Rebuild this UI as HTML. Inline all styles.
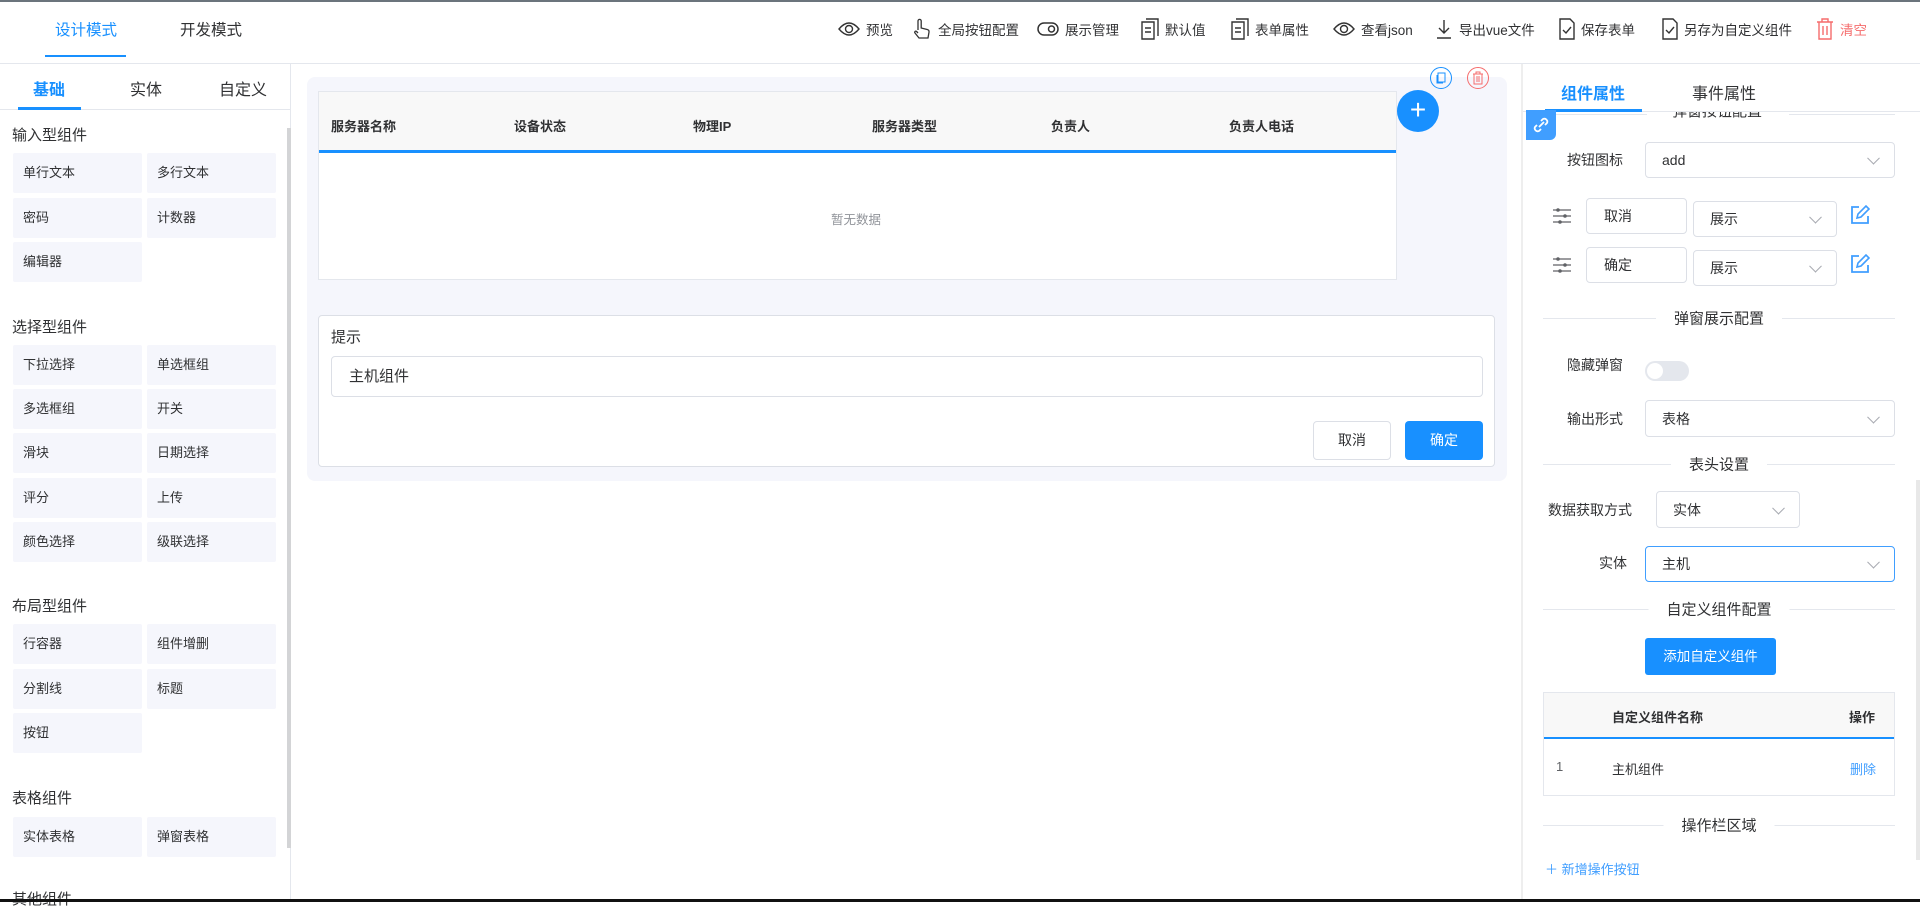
<!DOCTYPE html>
<html><head><meta charset="utf-8"><style>
*{margin:0;padding:0;box-sizing:border-box}
body{width:1920px;height:902px;overflow:hidden;background:#fff;font-family:"Liberation Sans","Noto Sans CJK SC",sans-serif;color:#303133;position:relative;font-size:14px}
.a{position:absolute;white-space:nowrap}
.tb{position:absolute;top:19px;height:20px;display:flex;align-items:center;font-size:13.5px;color:#303133}
.tb svg{margin-right:6px}
.cell{position:absolute;width:129px;height:40px;background:#f5f6fc;font-size:13px;color:#303133;padding-left:10px;line-height:40px;border-radius:2px}
.sec{position:absolute;left:12px;font-size:15px;color:#303133}
.th{position:absolute;top:116px;font-size:13px;font-weight:bold;color:#303133}
.sel{position:absolute;border:1px solid #dcdfe6;border-radius:4px;background:#fff;font-size:14px;color:#303133;padding-left:16px;display:flex;align-items:center}
.sel:after{content:"";position:absolute;right:16px;top:50%;width:8px;height:8px;border-right:1px solid #a8abb2;border-bottom:1px solid #a8abb2;transform:translateY(-70%) rotate(45deg)}
.lbl{position:absolute;font-size:14px;color:#303133;text-align:right}
.div{position:absolute;left:1543px;width:352px;height:1px;background:#e4e7ed}
.divt{position:absolute;background:#fff;padding:0 18px;font-size:15px;color:#303133;transform:translate(-50%,-50%);left:1719px}
</style></head><body>
<div class="a" style="left:0;top:0;width:1920px;height:2px;background:#6b747c"></div>
<!-- header -->
<div class="a" style="left:0;top:63px;width:1920px;height:1px;background:#e4e7ed"></div>
<div class="a" style="left:55px;top:18px;font-size:15.5px;color:#1890ff">设计模式</div>
<div class="a" style="left:45px;top:55px;width:81px;height:2px;background:#1890ff"></div>
<div class="a" style="left:180px;top:18px;font-size:15.5px;color:#303133">开发模式</div>

<div class="tb" style="left:838px"><svg width="22" height="16" viewBox="0 0 22 16"><path d="M1 8Q11-4 21 8Q11 20 1 8Z" fill="none" stroke="#333" stroke-width="1.4"/><circle cx="11" cy="8" r="3.5" fill="none" stroke="#333" stroke-width="1.4"/></svg>预览</div>
<div class="tb" style="left:912px"><svg width="20" height="22" viewBox="0 0 20 22"><path d="M6 12V3a1.6 1.6 0 013.2 0v7l6 1.5c1.5.4 2 1.2 1.8 2.6L16 20H7l-4-5c-.8-1 .3-2.4 1.5-1.6L6 15" fill="none" stroke="#333" stroke-width="1.3"/></svg>全局按钮配置</div>
<div class="tb" style="left:1037px"><svg width="22" height="14" viewBox="0 0 22 14"><rect x="1" y="1" width="20" height="12" rx="6" fill="none" stroke="#333" stroke-width="1.5"/><circle cx="14.5" cy="7" r="3" fill="none" stroke="#333" stroke-width="1.5"/></svg>展示管理</div>
<div class="tb" style="left:1141px"><svg width="18" height="22" viewBox="0 0 18 22"><path d="M5 1h12v17M1 4h12v17H1z" fill="none" stroke="#333" stroke-width="1.4"/><path d="M4 10h6M4 14h6" stroke="#333" stroke-width="1.4"/></svg>默认值</div>
<div class="tb" style="left:1231px"><svg width="18" height="22" viewBox="0 0 18 22"><path d="M5 1h12v17M1 4h12v17H1z" fill="none" stroke="#333" stroke-width="1.4"/><path d="M4 10h6M4 14h6" stroke="#333" stroke-width="1.4"/></svg>表单属性</div>
<div class="tb" style="left:1333px"><svg width="22" height="16" viewBox="0 0 22 16"><path d="M1 8Q11-4 21 8Q11 20 1 8Z" fill="none" stroke="#333" stroke-width="1.4"/><circle cx="11" cy="8" r="3.5" fill="none" stroke="#333" stroke-width="1.4"/></svg>查看json</div>
<div class="tb" style="left:1435px"><svg width="18" height="20" viewBox="0 0 18 20"><path d="M9 1v13M4 9l5 5 5-5M2 19h14" fill="none" stroke="#333" stroke-width="1.4"/></svg>导出vue文件</div>
<div class="tb" style="left:1559px"><svg width="16" height="22" viewBox="0 0 16 22"><path d="M1 1h10l4 4v16H1z" fill="none" stroke="#333" stroke-width="1.4"/><path d="M4 12l3 3 5-6" fill="none" stroke="#333" stroke-width="1.4"/></svg>保存表单</div>
<div class="tb" style="left:1662px"><svg width="16" height="22" viewBox="0 0 16 22"><path d="M1 1h10l4 4v16H1z" fill="none" stroke="#333" stroke-width="1.4"/><path d="M4 12l3 3 5-6" fill="none" stroke="#333" stroke-width="1.4"/></svg>另存为自定义组件</div>
<div class="tb" style="left:1816px;color:#f56c6c"><svg width="18" height="22" viewBox="0 0 18 22"><path d="M1 4h16M6 4V1h6v3M3 4v17h12V4M7 8v9M11 8v9" fill="none" stroke="#f56c6c" stroke-width="1.4"/></svg>清空</div>

<!-- left panel -->
<div class="a" style="left:290px;top:64px;width:1px;height:838px;background:#e4e7ed"></div>
<div class="a" style="left:0;top:109px;width:290px;height:1px;background:#e4e7ed"></div>
<div class="a" style="left:33px;top:76px;font-size:16px;color:#1890ff;font-weight:bold">基础</div>
<div class="a" style="left:18px;top:107px;width:63px;height:3px;background:#1890ff"></div>
<div class="a" style="left:130px;top:76px;font-size:16px">实体</div>
<div class="a" style="left:219px;top:76px;font-size:16px">自定义</div>
<div class="a" style="left:287px;top:128px;width:4px;height:720px;background:#d3d4d6"></div>

<div class="sec" style="top:124px">输入型组件</div>
<div class="cell" style="left:13px;top:153px">单行文本</div><div class="cell" style="left:147px;top:153px">多行文本</div>
<div class="cell" style="left:13px;top:198px">密码</div><div class="cell" style="left:147px;top:198px">计数器</div>
<div class="cell" style="left:13px;top:242px">编辑器</div>
<div class="sec" style="top:316px">选择型组件</div>
<div class="cell" style="left:13px;top:345px">下拉选择</div><div class="cell" style="left:147px;top:345px">单选框组</div>
<div class="cell" style="left:13px;top:389px">多选框组</div><div class="cell" style="left:147px;top:389px">开关</div>
<div class="cell" style="left:13px;top:433px">滑块</div><div class="cell" style="left:147px;top:433px">日期选择</div>
<div class="cell" style="left:13px;top:478px">评分</div><div class="cell" style="left:147px;top:478px">上传</div>
<div class="cell" style="left:13px;top:522px">颜色选择</div><div class="cell" style="left:147px;top:522px">级联选择</div>
<div class="sec" style="top:595px">布局型组件</div>
<div class="cell" style="left:13px;top:624px">行容器</div><div class="cell" style="left:147px;top:624px">组件增删</div>
<div class="cell" style="left:13px;top:669px">分割线</div><div class="cell" style="left:147px;top:669px">标题</div>
<div class="cell" style="left:13px;top:713px">按钮</div>
<div class="sec" style="top:787px">表格组件</div>
<div class="cell" style="left:13px;top:817px">实体表格</div><div class="cell" style="left:147px;top:817px">弹窗表格</div>
<div class="sec" style="top:888px">其他组件</div>

<!-- center -->
<div class="a" style="left:307px;top:77px;width:1200px;height:404px;background:#f5f6fc;border-radius:8px"></div>
<div class="a" style="left:318px;top:91px;width:1079px;height:189px;background:#fff;border:1px solid #e4e7ed"></div>
<div class="a" style="left:319px;top:92px;width:1077px;height:58px;background:#f8f8f8"></div>
<div class="a" style="left:319px;top:150px;width:1077px;height:3px;background:#1890ff"></div>
<div class="th" style="left:331px">服务器名称</div>
<div class="th" style="left:514px">设备状态</div>
<div class="th" style="left:693px">物理IP</div>
<div class="th" style="left:872px">服务器类型</div>
<div class="th" style="left:1051px">负责人</div>
<div class="th" style="left:1229px">负责人电话</div>
<div class="a" style="left:831px;top:209px;font-size:12.5px;color:#909399">暂无数据</div>
<div class="a" style="left:1397px;top:90px;width:42px;height:42px;border-radius:50%;background:#1890ff;color:#fff;font-size:28px;line-height:40px;text-align:center;font-weight:300">+</div>
<div class="a" style="left:1430px;top:67px;width:22px;height:22px;border-radius:50%;border:1px solid #1890ff"><svg width="20" height="20" viewBox="0 0 20 20" style="position:absolute;left:0;top:0"><rect x="7" y="5" width="7" height="9" fill="none" stroke="#1890ff"/><path d="M6 7v8h6" fill="none" stroke="#1890ff"/></svg></div>
<div class="a" style="left:1467px;top:67px;width:22px;height:22px;border-radius:50%;border:1px solid #f56c6c"><svg width="20" height="20" viewBox="0 0 20 20" style="position:absolute;left:0;top:0"><path d="M5 6h10M8 6V4h4v2M6 6v10h8V6M9 8v6M11 8v6" fill="none" stroke="#f56c6c"/></svg></div>

<div class="a" style="left:318px;top:315px;width:1177px;height:152px;border:1px solid #dcdfe6;border-radius:4px;background:#fff"></div>
<div class="a" style="left:331px;top:326px;font-size:15px">提示</div>
<div class="a" style="left:331px;top:356px;width:1152px;height:41px;border:1px solid #dcdfe6;border-radius:4px;font-size:15px;line-height:39px;padding-left:17px">主机组件</div>
<div class="a" style="left:1313px;top:421px;width:78px;height:39px;border:1px solid #dcdfe6;border-radius:4px;font-size:14px;line-height:37px;text-align:center">取消</div>
<div class="a" style="left:1405px;top:421px;width:78px;height:39px;background:#1890ff;border-radius:4px;font-size:14px;line-height:39px;text-align:center;color:#fff">确定</div>

<!-- right panel -->
<div class="a" style="left:1521px;top:64px;width:2px;height:838px;background:#eee"></div>
<div class="a" style="left:1523px;top:111px;width:397px;height:1px;background:#e4e7ed"></div>
<div class="a" style="left:1561px;top:80px;font-size:16px;color:#1890ff;font-weight:bold">组件属性</div>
<div class="a" style="left:1545px;top:109px;width:97px;height:3px;background:#1890ff"></div>
<div class="a" style="left:1692px;top:80px;font-size:16px">事件属性</div>
<div class="div" style="top:114px;left:1555px;width:92px;background:#e4e7ed"></div>
<div class="div" style="top:114px;left:1789px;width:106px"></div>
<div class="a" style="left:1660px;top:112px;width:130px;height:12px;overflow:hidden"><div style="position:absolute;left:12px;top:-11px;font-size:15px;line-height:22px">弹窗按钮配置</div></div>
<div class="a" style="left:1526px;top:110px;width:30px;height:30px;background:#409eff;border-radius:0 0 6px 0"><svg width="30" height="30" viewBox="0 0 30 30"><path d="M13 17l5-5M11 15l-2 2a3 3 0 004 4l2-2M19 15l2-2a3 3 0 00-4-4l-2 2" fill="none" stroke="#fff" stroke-width="1.8"/></svg></div>

<div class="lbl" style="left:1567px;top:150px">按钮图标</div>
<div class="sel" style="left:1645px;top:142px;width:250px;height:36px">add</div>

<svg class="a" style="left:1552px;top:206px" width="20" height="20" viewBox="0 0 20 20"><path d="M1 4h18M1 10h18M1 16h18" stroke="#606266" stroke-width="1.2"/><circle cx="6" cy="4" r="1.8" fill="#606266"/><circle cx="13" cy="10" r="1.8" fill="#606266"/><circle cx="8" cy="16" r="1.8" fill="#606266"/></svg>
<div class="a" style="left:1586px;top:198px;width:101px;height:36px;border:1px solid #dcdfe6;border-radius:4px;font-size:14px;line-height:34px;padding-left:17px">取消</div>
<div class="sel" style="left:1693px;top:201px;width:144px;height:36px">展示</div>
<svg class="a" style="left:1850px;top:205px" width="20" height="20" viewBox="0 0 20 20"><path d="M9 2H2v16h16v-7" fill="none" stroke="#409eff" stroke-width="1.8"/><path d="M7 13l1-4 8-8 3 3-8 8z" fill="none" stroke="#409eff" stroke-width="1.6"/></svg>

<svg class="a" style="left:1552px;top:255px" width="20" height="20" viewBox="0 0 20 20"><path d="M1 4h18M1 10h18M1 16h18" stroke="#606266" stroke-width="1.2"/><circle cx="6" cy="4" r="1.8" fill="#606266"/><circle cx="13" cy="10" r="1.8" fill="#606266"/><circle cx="8" cy="16" r="1.8" fill="#606266"/></svg>
<div class="a" style="left:1586px;top:247px;width:101px;height:36px;border:1px solid #dcdfe6;border-radius:4px;font-size:14px;line-height:34px;padding-left:17px">确定</div>
<div class="sel" style="left:1693px;top:250px;width:144px;height:36px">展示</div>
<svg class="a" style="left:1850px;top:254px" width="20" height="20" viewBox="0 0 20 20"><path d="M9 2H2v16h16v-7" fill="none" stroke="#409eff" stroke-width="1.8"/><path d="M7 13l1-4 8-8 3 3-8 8z" fill="none" stroke="#409eff" stroke-width="1.6"/></svg>

<div class="div" style="top:318px"></div><div class="divt" style="top:318px">弹窗展示配置</div>
<div class="lbl" style="left:1567px;top:355px">隐藏弹窗</div>
<div class="a" style="left:1645px;top:361px;width:44px;height:20px;border-radius:10px;background:#e4e7ed"><div style="position:absolute;left:2px;top:2px;width:16px;height:16px;border-radius:50%;background:#fff"></div></div>
<div class="lbl" style="left:1567px;top:409px">输出形式</div>
<div class="sel" style="left:1645px;top:400px;width:250px;height:37px">表格</div>

<div class="div" style="top:464px"></div><div class="divt" style="top:464px">表头设置</div>
<div class="lbl" style="left:1548px;top:500px">数据获取方式</div>
<div class="sel" style="left:1656px;top:491px;width:144px;height:37px">实体</div>
<div class="lbl" style="left:1599px;top:553px">实体</div>
<div class="sel" style="left:1645px;top:546px;width:250px;height:36px;border-color:#409eff">主机</div>

<div class="div" style="top:609px"></div><div class="divt" style="top:609px">自定义组件配置</div>
<div class="a" style="left:1645px;top:638px;width:131px;height:37px;background:#1890ff;border-radius:3px;color:#fff;font-size:13.5px;line-height:37px;text-align:center">添加自定义组件</div>

<div class="a" style="left:1543px;top:692px;width:352px;height:104px;border:1px solid #e4e7ed"></div>
<div class="a" style="left:1544px;top:693px;width:350px;height:44px;background:#f8f8f8"></div>
<div class="a" style="left:1544px;top:737px;width:350px;height:2px;background:#1890ff"></div>
<div class="a" style="left:1612px;top:707px;font-size:13px;font-weight:bold">自定义组件名称</div>
<div class="a" style="left:1849px;top:707px;font-size:13px;font-weight:bold">操作</div>
<div class="a" style="left:1556px;top:759px;font-size:13px;color:#606266">1</div>
<div class="a" style="left:1612px;top:759px;font-size:13px">主机组件</div>
<div class="a" style="left:1850px;top:759px;font-size:13px;color:#409eff">删除</div>

<div class="div" style="top:825px"></div><div class="divt" style="top:825px">操作栏区域</div>
<div class="a" style="left:1545px;top:859px;font-size:13px;color:#409eff">＋ 新增操作按钮</div>
<div class="a" style="left:1916px;top:480px;width:4px;height:380px;background:#e8e8e8"></div>

<div class="a" style="left:0;top:899px;width:1920px;height:3px;background:#111"></div>
</body></html>
